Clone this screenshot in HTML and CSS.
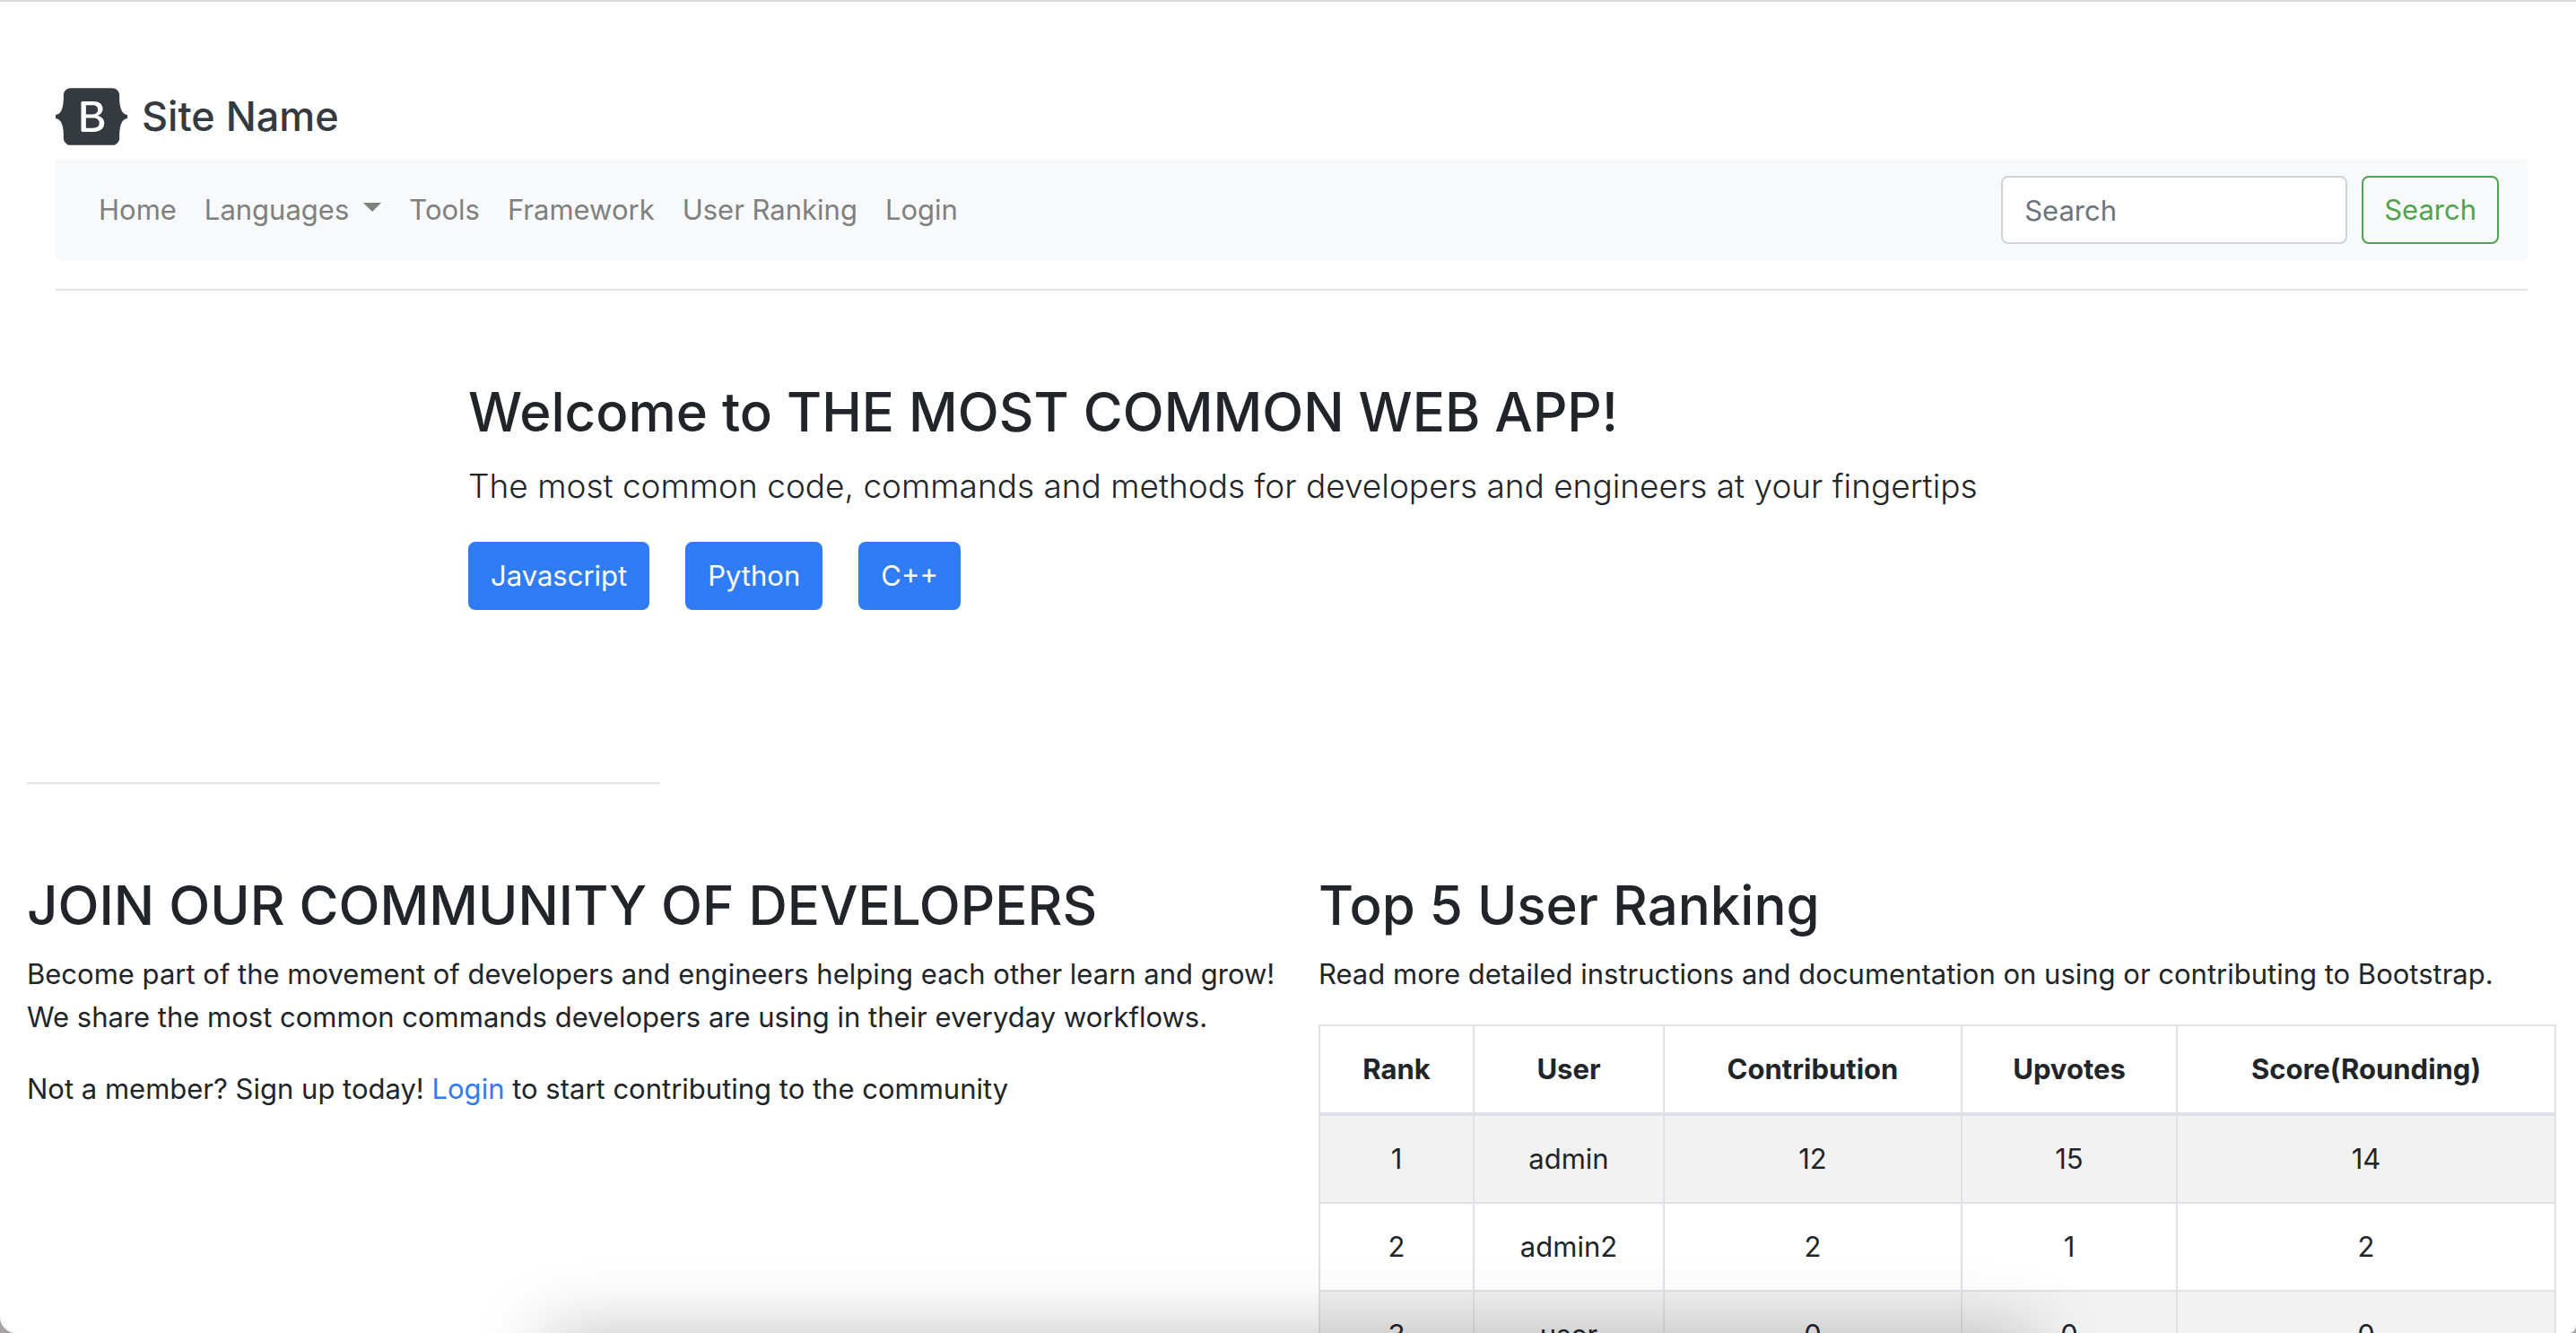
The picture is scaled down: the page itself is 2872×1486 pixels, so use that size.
FILE: index.html
```html
<!DOCTYPE html>
<html lang="en">
<head>
<meta charset="utf-8">
<meta name="viewport" content="width=device-width, initial-scale=1">
<title>Site Name</title>
<link rel="stylesheet" href="styles.css">
</head>
<body>
<div class="page">
  <header class="site-header">
    <a class="brand" href="#">
      <svg class="brand-mark" viewBox="0 0 118 94" width="80" height="64" role="img" aria-label="Bootstrap"><path fill-rule="evenodd" clip-rule="evenodd" fill="currentColor" d="M24.509 0c-6.733 0-11.715 5.893-11.492 12.284.214 6.14-.064 14.092-2.066 20.577C8.943 39.365 5.547 43.485 0 44.014v5.972c5.547.529 8.943 4.649 10.951 11.153 2.002 6.485 2.28 14.437 2.066 20.577C12.794 88.106 17.776 94 24.51 94H93.5c6.733 0 11.714-5.893 11.491-12.284-.214-6.14.064-14.092 2.066-20.577 2.009-6.504 5.396-10.624 10.943-11.153v-5.972c-5.547-.529-8.934-4.649-10.943-11.153-2.002-6.484-2.28-14.437-2.066-20.577C105.214 5.894 100.233 0 93.5 0H24.508zM80 57.863C80 66.663 73.436 72 62.543 72H44a2 2 0 01-2-2V24a2 2 0 012-2h18.437c9.083 0 15.044 4.92 15.044 12.474 0 5.302-4.01 10.049-9.119 10.88v.277C75.317 46.394 80 51.21 80 57.863zM60.521 28.34H49.948v14.934h8.905c6.884 0 10.68-2.772 10.68-7.727 0-4.643-3.264-7.207-9.012-7.207zM49.948 49.2v16.458H60.91c7.167 0 10.964-2.876 10.964-8.281 0-5.406-3.903-8.178-11.425-8.178H49.948z"/></svg>
      <span class="brand-name">Site Name</span>
    </a>
    <nav class="navbar" aria-label="Main">
      <ul class="nav-list">
        <li><a class="nav-link" href="#">Home</a></li>
        <li><a class="nav-link nav-link-toggle" href="#" aria-haspopup="true">Languages</a></li>
        <li><a class="nav-link" href="#">Tools</a></li>
        <li><a class="nav-link" href="#">Framework</a></li>
        <li><a class="nav-link" href="#">User Ranking</a></li>
        <li><a class="nav-link" href="#">Login</a></li>
      </ul>
      <form class="search" role="search">
        <input class="search-input" type="search" placeholder="Search" aria-label="Search">
        <button class="btn btn-outline" type="submit">Search</button>
      </form>
    </nav>
  </header>

  <main>
    <section class="hero">
      <h1 class="heading">Welcome to THE MOST COMMON WEB APP!</h1>
      <p class="lead">The most common code, commands and methods for developers and engineers at your fingertips</p>
      <div class="hero-actions">
        <button class="btn btn-primary" type="button">Javascript</button>
        <button class="btn btn-primary" type="button">Python</button>
        <button class="btn btn-primary" type="button">C++</button>
      </div>
    </section>

    <hr class="divider">

    <div class="columns">
      <section class="column">
        <h2 class="heading">JOIN OUR COMMUNITY OF DEVELOPERS</h2>
        <p class="text">Become part of the movement of developers and engineers helping each other learn and grow!<br>We share the most common commands developers are using in their everyday workflows.</p>
        <p class="text">Not a member? Sign up today! <a class="link" href="#">Login</a> to start contributing to the community</p>
      </section>
      <section class="column">
        <h2 class="heading">Top 5 User Ranking</h2>
        <p class="text">Read more detailed instructions and documentation on using or contributing to Bootstrap.</p>
        <table class="ranking">
          <colgroup><col class="col-rank"><col class="col-user"><col class="col-contribution"><col class="col-upvotes"><col></colgroup>
          <thead>
            <tr><th scope="col">Rank</th><th scope="col">User</th><th scope="col">Contribution</th><th scope="col">Upvotes</th><th scope="col">Score(Rounding)</th></tr>
          </thead>
          <tbody>
            <tr><td>1</td><td>admin</td><td>12</td><td>15</td><td>14</td></tr>
            <tr><td>2</td><td>admin2</td><td>2</td><td>1</td><td>2</td></tr>
            <tr><td>3</td><td>user</td><td>0</td><td>0</td><td>0</td></tr>
          </tbody>
        </table>
      </section>
    </div>
  </main>
</div>
<div class="dock-shadow" aria-hidden="true"></div>
</body>
</html>
```
FILE: styles.css
```css
*, *::before, *::after { box-sizing: border-box; }

body {
  margin: 0;
  background: #a7a2a5;
  color: #212529;
  font-family: Inter, "Liberation Sans", sans-serif;
  font-size: 31px;
  line-height: 48px;
}

.page {
  height: 100vh;
  overflow: hidden;
  background: #fff;
  border-top: 2px solid #dcdae0;
  border-bottom-left-radius: 18px;
  border-bottom-right-radius: 8px;
}

h1, h2, p, ul { margin: 0; padding: 0; }

/* Header */
.site-header {
  margin: 0 54px 0 62px;
  padding: 96px 0 32px;
  border-bottom: 2px solid #dee2e6;
}

.brand {
  display: flex;
  width: max-content;
  align-items: center;
  gap: 16px;
  margin-bottom: 16px;
  color: #343a40;
  text-decoration: none;
}

.brand-name {
  font-size: 45px;
  font-weight: 500;
  line-height: 64px;
}

.navbar {
  display: flex;
  align-items: center;
  justify-content: space-between;
  height: 112px;
  padding: 0 32px;
  background: #f8f9fa;
}

.nav-list {
  display: flex;
  list-style: none;
}

.nav-link {
  display: flex;
  align-items: center;
  padding: 16px 15px 16px 16px;
  color: #7f8080;
  text-decoration: none;
}

.nav-link-toggle::after {
  content: "";
  margin: 0 0 6px 16px;
  border-top: 10px solid;
  border-right: 10px solid transparent;
  border-left: 10px solid transparent;
}

.search {
  display: flex;
  gap: 16px;
}

.search-input,
.btn {
  height: 76px;
  padding: 0 23px;
  border: 2px solid;
  border-radius: 8px;
  font: inherit;
}

.search-input {
  width: 386px;
  padding: 0 24px;
  border-color: #ced4da;
  background: #fff;
  appearance: none;
}

.search-input::placeholder { color: #6c757d; opacity: 1; }

.btn-outline {
  border-color: #51a351;
  background: transparent;
  color: #51a351;
}

.btn-primary {
  border-color: #2f7cf6;
  background: #2f7cf6;
  color: #fff;
}

/* Content */
.heading {
  margin-bottom: 14px;
  font-size: 60px;
  font-weight: 500;
  line-height: 78px;
}

.hero {
  padding: 96px 522px 192px;
}

.lead {
  margin-bottom: 32px;
  font-size: 37px;
  font-weight: 300;
  line-height: 60px;
}

.hero-actions {
  display: flex;
  gap: 40px;
}

.divider {
  width: 25%;
  max-width: 706px;
  height: 2px;
  margin: 0 0 96px 30px;
  border: 0;
  background: #e5e5e5;
}

.columns {
  display: grid;
  grid-template-columns: 47fr 46fr;
  gap: 30px;
  padding: 0 22px 0 30px;
}

.text { margin-bottom: 32px; }

.link {
  color: #2f7cf6;
  text-decoration: none;
}

.ranking {
  width: 100%;
  table-layout: fixed;
  border-collapse: collapse;
  text-align: center;
}

.col-rank { width: 172px; }
.col-user { width: 212px; }
.col-contribution { width: 332px; }
.col-upvotes { width: 240px; }

.ranking th,
.ranking td {
  padding: 24px 0;
  border: 2px solid #dee2e6;
}

.ranking th {
  border-bottom-width: 4px;
  font-weight: 700;
}

.ranking tbody tr:nth-child(odd) { background: #f2f2f2; }

/* Soft shadow rising from below the window */
.dock-shadow {
  position: fixed;
  right: 608px;
  bottom: -120px;
  left: 608px;
  height: 120px;
  box-shadow: 0 0 80px rgba(0, 0, 0, 0.25);
  pointer-events: none;
}
```
